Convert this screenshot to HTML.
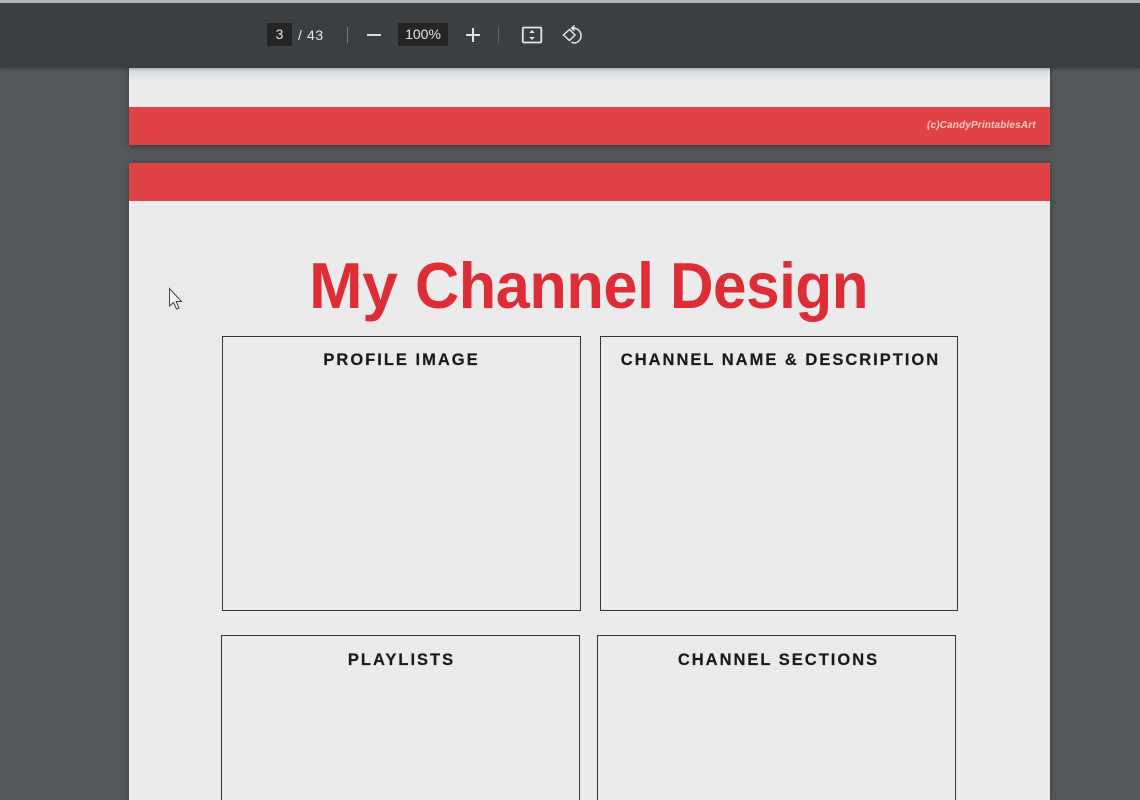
<!DOCTYPE html>
<html><head><meta charset="utf-8"><style>
*{box-sizing:border-box}
html,body{margin:0;padding:0;width:1140px;height:800px;overflow:hidden;background:#53575a;font-family:"Liberation Sans",sans-serif}
#w{position:absolute;left:0;top:0;width:1140px;height:800px;overflow:hidden;background:#54585a}
.a{position:absolute}
.box{position:absolute;border:1.5px solid #363636}
.lab{position:absolute;font-weight:bold;font-size:16.5px;letter-spacing:2px;color:#1a1a1a;text-align:center;white-space:nowrap;line-height:20px;-webkit-text-stroke:.2px #1a1a1a}
.tb{color:#e4e6e7;font-size:14px;line-height:22px;white-space:nowrap}
.t{position:absolute;top:248px;font-size:65px;line-height:75px;font-weight:bold;color:#dd2e38;white-space:nowrap;letter-spacing:-.5px;transform-origin:0 0}
</style></head><body><div id="w">
<div class="a" style="left:129px;top:60px;width:921px;height:85px;background:#e9ebec;box-shadow:0 2px 6px rgba(0,0,0,.35)"></div>
<div class="a" style="left:129px;top:68px;width:921px;height:14px;background:linear-gradient(#d9dcde,#e9ebec)"></div>
<div class="a" style="left:129px;top:107px;width:921px;height:38px;background:#e04345"></div>
<div class="a" style="left:927px;top:119px;font-size:10px;line-height:13px;font-weight:bold;font-style:italic;color:#f3c9c6;white-space:nowrap;letter-spacing:.15px">(c)CandyPrintablesArt</div>
<div class="a" style="left:129px;top:163px;width:921px;height:637px;background:#ebebeb;box-shadow:0 0 6px rgba(0,0,0,.3)"></div>
<div class="a" style="left:129px;top:163px;width:921px;height:38px;background:#e04345"></div>
<div class="t" style="left:309px;transform:scaleX(.99)">My</div>
<div class="t" style="left:415px;transform:scaleX(.943)">Channel</div>
<div class="t" style="left:670px;transform:scaleX(.927)">Design</div>
<div class="box" style="left:222px;top:336px;width:359px;height:275px"></div>
<div class="box" style="left:600px;top:336px;width:358px;height:275px"></div>
<div class="box" style="left:221px;top:635px;width:359px;height:185px"></div>
<div class="box" style="left:597px;top:635px;width:359px;height:185px"></div>
<div class="lab" style="left:222px;top:350px;width:359px">PROFILE IMAGE</div>
<div class="lab" style="left:601px;top:350px;width:359px">CHANNEL NAME &amp; DESCRIPTION</div>
<div class="lab" style="left:222px;top:650px;width:359px">PLAYLISTS</div>
<div class="lab" style="left:599px;top:650px;width:359px">CHANNEL SECTIONS</div>
<svg class="a" style="left:165px;top:285px" width="22" height="28" viewBox="0 0 22 28"><path d="M4.500 3.500V21L8.500 17.500L11.500 24L14 23L11.200 16.500H16.500Z" fill="#f4f4f4" stroke="#444" stroke-width="1"/></svg>
<div class="a" style="left:0;top:0;width:1140px;height:68px;background:#3c3f42;box-shadow:0 1px 3px rgba(0,0,0,.3)"></div>
<div class="a" style="left:0;top:0;width:1140px;height:3px;background:#aeb4b8"></div>
<div class="a" style="left:267px;top:23px;width:25px;height:23px;background:#222426"></div>
<div class="a tb" style="left:267px;top:23px;width:25px;text-align:center">3</div>
<div class="a tb" style="left:298px;top:24px;font-size:14px;letter-spacing:.6px">/ 43</div>
<div class="a" style="left:347px;top:27px;width:1px;height:16px;background:#777a7c"></div>
<div class="a" style="left:367px;top:34px;width:14px;height:2px;background:#d8dadb"></div>
<div class="a" style="left:398px;top:23px;width:50px;height:23px;background:#222426"></div>
<div class="a tb" style="left:398px;top:23px;width:50px;text-align:center">100%</div>
<div class="a" style="left:466px;top:34px;width:14px;height:2px;background:#e0e2e3"></div>
<div class="a" style="left:472px;top:28px;width:2px;height:14px;background:#e0e2e3"></div>
<div class="a" style="left:498px;top:27px;width:1px;height:16px;background:#5f6264"></div>
<svg class="a" style="left:520px;top:24px" width="24" height="22" viewBox="0 0 24 22"><rect x="2.800" y="3.500" width="18.500" height="15" rx="1" fill="none" stroke="#e4e6e7" stroke-width="1.800"/><path d="M12 6L9.300 9H14.700ZM12 16L9.300 13H14.700Z" fill="#e4e6e7"/></svg>
<svg class="a" style="left:561px;top:23px" width="24" height="24" viewBox="0 0 24 24"><path d="M2.500 12L8.500 6.500L14 12L8.500 17.500Z" fill="none" stroke="#e4e6e7" stroke-width="1.500"/><path d="M10 5.200H13.500A7.500 7.500 0 0 1 14 20A7 7 0 0 1 10.500 19.200" fill="none" stroke="#e4e6e7" stroke-width="1.500"/><path d="M13.500 1.500L9.500 5.200L13.500 8.500Z" fill="#e4e6e7"/></svg>
</div></body></html>
